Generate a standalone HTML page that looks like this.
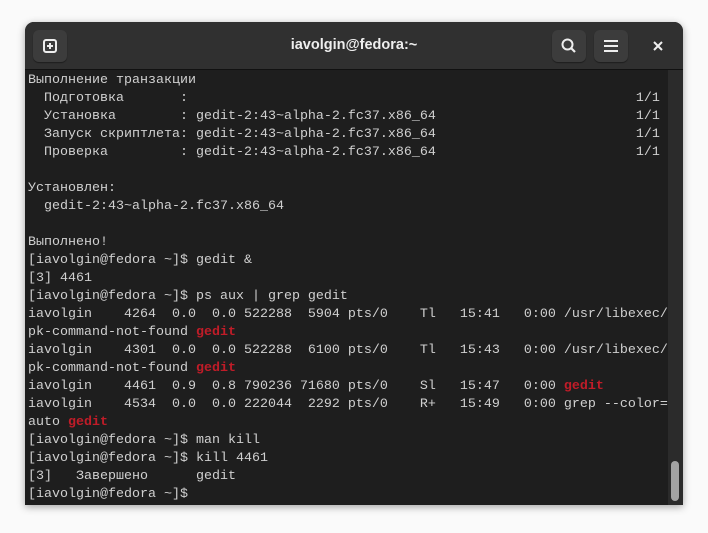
<!DOCTYPE html>
<html><head><meta charset="utf-8"><style>
body{margin:0;width:708px;height:533px;background:#fafafa;overflow:hidden;position:relative}
.win{position:absolute;left:25px;top:22px;width:658px;height:483px;background:#1e1e1e;border-radius:9px 9px 0 0;overflow:hidden;box-shadow:0 2px 8px rgba(0,0,0,.35)}
.hdr{position:absolute;left:0;top:0;width:658px;height:47px;background:#303030;border-bottom:1px solid #111}
.btn{position:absolute;top:8px;width:34px;height:32px;background:#3c3c3c;border-radius:6px;box-shadow:0 1px 1px rgba(0,0,0,.4)}
.title{position:absolute;left:0;right:0;top:15px;text-align:center;color:#eee;font:bold 14.5px "Liberation Sans",sans-serif}
pre{position:absolute;left:3px;top:50px;margin:0;color:#d0d0d0;font:13.34px/18px "Liberation Mono","Noto Sans CJK SC",monospace}
b{color:#c01c28}
.sb{position:absolute;left:643px;top:48px;width:15px;height:435px;background:#2b2b2b}
.th{position:absolute;left:3px;top:391px;width:8px;height:40px;background:#a3a3a3;border-radius:4px}
</style></head><body>
<div class="win">
<div class="hdr">
<div class="btn" style="left:8px"><svg width="34" height="32"><rect x="11" y="10" width="12" height="12" rx="2" fill="none" stroke="#eee" stroke-width="2"/><path d="M17 13v6M14 16h6" stroke="#eee" stroke-width="2"/></svg></div>
<div class="title">iavolgin@fedora:~</div>
<div class="btn" style="left:527px"><svg width="34" height="32"><circle cx="15.5" cy="14.5" r="5" fill="none" stroke="#eee" stroke-width="2"/><path d="M19 18l4 4" stroke="#eee" stroke-width="2.2"/></svg></div>
<div class="btn" style="left:569px"><svg width="34" height="32"><path d="M10 11h14M10 16h14M10 21h14" stroke="#eee" stroke-width="2"/></svg></div>
<svg style="position:absolute;left:626px;top:17px" width="14" height="14"><path d="M3 3l8 8M11 3l-8 8" stroke="#eee" stroke-width="2"/></svg>
</div>
<pre>Выполнение транзакции
  Подготовка       :                                                        1/1
  Установка        : gedit-2:43~alpha-2.fc37.x86_64                         1/1
  Запуск скриптлета: gedit-2:43~alpha-2.fc37.x86_64                         1/1
  Проверка         : gedit-2:43~alpha-2.fc37.x86_64                         1/1

Установлен:
  gedit-2:43~alpha-2.fc37.x86_64

Выполнено!
[iavolgin@fedora ~]$ gedit &amp;
[3] 4461
[iavolgin@fedora ~]$ ps aux | grep gedit
iavolgin    4264  0.0  0.0 522288  5904 pts/0    Tl   15:41   0:00 /usr/libexec/
pk-command-not-found <b>gedit</b>
iavolgin    4301  0.0  0.0 522288  6100 pts/0    Tl   15:43   0:00 /usr/libexec/
pk-command-not-found <b>gedit</b>
iavolgin    4461  0.9  0.8 790236 71680 pts/0    Sl   15:47   0:00 <b>gedit</b>
iavolgin    4534  0.0  0.0 222044  2292 pts/0    R+   15:49   0:00 grep --color=
auto <b>gedit</b>
[iavolgin@fedora ~]$ man kill
[iavolgin@fedora ~]$ kill 4461
[3]   Завершено      gedit
[iavolgin@fedora ~]$</pre>
<div class="sb"><div class="th"></div></div>
</div>
</body></html>
